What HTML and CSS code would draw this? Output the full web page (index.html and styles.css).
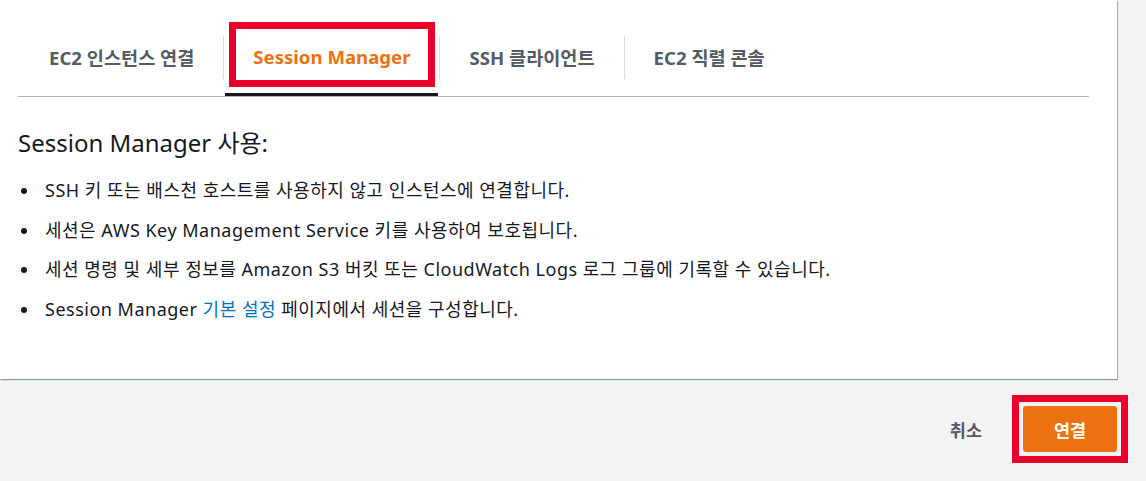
FILE: index.html
```html
<!DOCTYPE html>
<html lang="ko">
<head>
    <meta charset="UTF-8">
    <meta name="viewport" content="width=device-width, initial-scale=1.0">
    <title>인스턴스에 연결</title>
    <link rel="stylesheet" href="styles.css">
</head>
<body>
    <div class="connect-card">
        <div class="tabs">
            <button class="tab">EC2 인스턴스 연결</button>
            <span class="tab-divider"></span>
            <button class="tab tab-active">Session Manager</button>
            <span class="tab-divider"></span>
            <button class="tab">SSH 클라이언트</button>
            <span class="tab-divider"></span>
            <button class="tab">EC2 직렬 콘솔</button>
        </div>

        <div class="tab-content">
            <h2>Session Manager 사용:</h2>
            <ul class="feature-list">
                <li>SSH 키 또는 배스천 호스트를 사용하지 않고 인스턴스에 연결합니다.</li>
                <li>세션은 AWS Key Management Service 키를 사용하여 보호됩니다.</li>
                <li>세션 명령 및 세부 정보를 Amazon S3 버킷 또는 CloudWatch Logs 로그 그룹에 기록할 수 있습니다.</li>
                <li>Session Manager <a href="#">기본 설정</a> 페이지에서 세션을 구성합니다.</li>
            </ul>
        </div>
    </div>

    <div class="actions">
        <button class="btn-cancel">취소</button>
        <span class="highlight">
            <button class="btn-connect">연결</button>
        </span>
    </div>
</body>
</html>
```

FILE: styles.css
```css
body {
    font-family: "Noto Sans", "Noto Sans CJK KR", sans-serif;
    background-color: #f2f3f3;
    color: #16191f;
    margin: 0;
    padding: 0 0 40px 0;
}

.connect-card {
    width: 1117px;
    background-color: #fff;
    padding: 19px 28px 0 18px;
    box-sizing: border-box;
    height: 379px;
    box-shadow: 1px 1px 1px 0 rgba(0, 28, 36, 0.3), 0 1px 1px 0 rgba(0, 28, 36, 0.2);
}

.tabs {
    display: flex;
    align-items: center;
    padding-left: 3px;
    border-bottom: 1px solid #aab7b8;
}

.tab {
    position: relative;
    height: 77px;
    padding: 0 28px;
    border: none;
    border-bottom: 3px solid transparent;
    background: none;
    font-family: inherit;
    font-size: 18.6px;
    font-weight: bold;
    color: #545b64;
    cursor: pointer;
}

.tab-active {
    color: #ec7211;
    border-bottom-color: #16191f;
}

/* red highlight box from the screenshot */
.tab-active::after {
    content: "";
    position: absolute;
    top: 3px;
    left: 4px;
    right: 3px;
    bottom: 6px;
    border: 7px solid #e8002a;
}

.tab-divider {
    width: 1px;
    height: 42px;
    margin: 0 1px;
    background-color: #d5dbdb;
}

.tab-content h2 {
    font-size: 24px;
    font-weight: normal;
    margin: 30px 0 19px 0;
    line-height: 32px;
}

.feature-list {
    list-style: none;
    padding: 0;
    margin: 0;
}

.feature-list li {
    font-size: 18px;
    letter-spacing: 0.5px;
    line-height: 24px;
    margin-bottom: 15.7px;
}

.feature-list li::before {
    content: "";
    display: inline-block;
    width: 6px;
    height: 6px;
    border-radius: 50%;
    background-color: #16191f;
    margin: 0 18px 0 3px;
    vertical-align: 3px;
}

.feature-list a {
    color: #0073bb;
    text-decoration: none;
}

.actions {
    width: 1117px;
    display: flex;
    justify-content: flex-end;
    align-items: center;
    margin-top: 16px;
}

.btn-cancel {
    border: none;
    background: none;
    font-family: inherit;
    font-size: 17.5px;
    font-weight: bold;
    color: #545b64;
    padding: 4px 20px;
    margin-right: 10px;
    cursor: pointer;
}

/* red highlight box from the screenshot */
.highlight {
    display: flex;
    border: 7px solid #e8002a;
    padding: 4px;
    margin-right: -11px;
}

.btn-connect {
    width: 94px;
    height: 46px;
    border: none;
    border-radius: 3px;
    background-color: #ec7211;
    color: #fff;
    font-family: inherit;
    font-size: 17.5px;
    font-weight: bold;
    cursor: pointer;
}
```
